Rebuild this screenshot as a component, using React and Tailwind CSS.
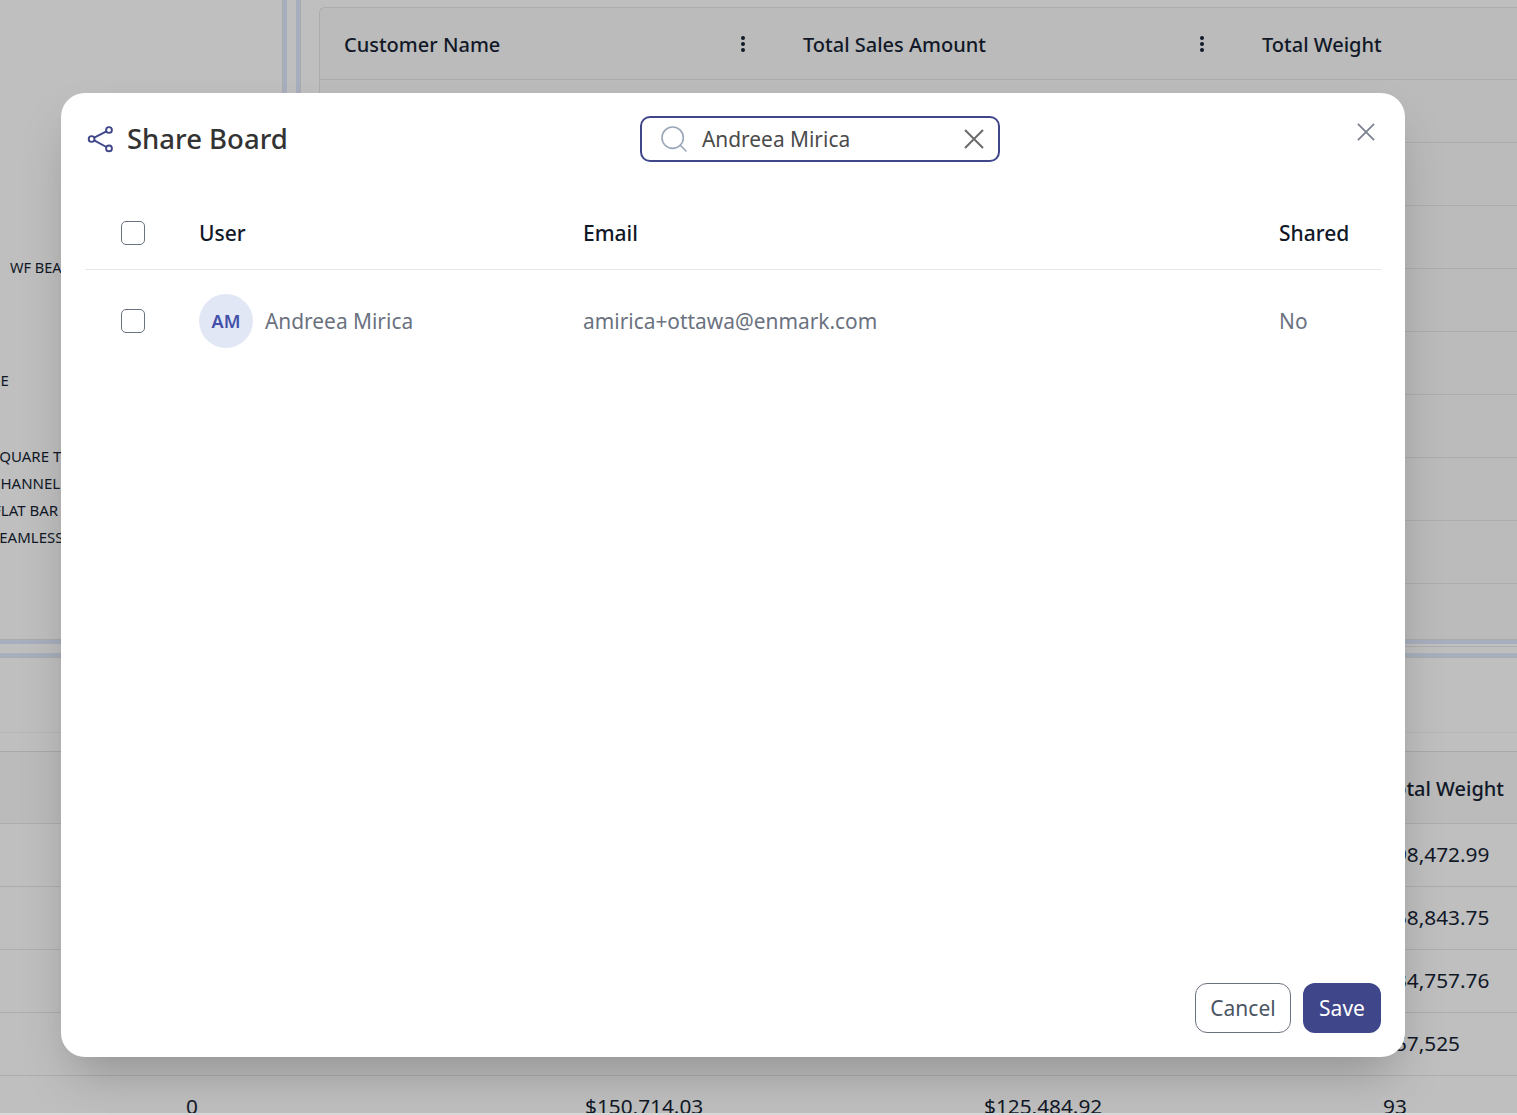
import React from 'react';
import { Search } from 'lucide-react';

const font = { fontFamily: '"Noto Sans", sans-serif' };

const ShareIcon = () => (
  <svg width="28" height="28" viewBox="0 0 28 28" fill="none" stroke="#3f478a" strokeWidth="1.9">
    <circle cx="23" cy="5" r="2.9" />
    <circle cx="5.6" cy="14" r="2.9" />
    <circle cx="23" cy="23.4" r="2.9" />
    <path d="M20.4 6.4 8.2 12.6M8.2 15.4l12.2 6.6" />
  </svg>
);

const Cross = ({ size, color }) => (
  <svg width={size} height={size} viewBox="0 0 20 20" fill="none" stroke={color} strokeWidth="2" className="shrink-0">
    <path d="M1 1l18 18M19 1 1 19" />
  </svg>
);

const Kebab = () => (
  <svg width="6" height="18" viewBox="0 0 6 18" fill="#111827">
    <circle cx="3" cy="3" r="2" />
    <circle cx="3" cy="9" r="2" />
    <circle cx="3" cy="15" r="2" />
  </svg>
);

const Checkbox = () => (
  <div className="w-6 h-6 rounded-[5px] border border-[#6b7280] bg-white" />
);

const topRows = [0, 1, 2, 3, 4, 5, 6, 7, 8];

const bottomRows = [
  ['', '', '', '298,472.99'],
  ['', '', '', '158,843.75'],
  ['', '', '', '134,757.76'],
  ['', '', '', '157,525'],
  ['0', '$150,714.03', '$125,484.92', '93'],
];

// greyed out board behind the modal
const Board = () => (
  <div className="h-[1113px] bg-[#bfbfbf] overflow-hidden text-[#111827]">
    <div className="h-[639px] flex">
      <div className="w-[282px] pt-[258px] text-[15px] leading-[19px] overflow-hidden whitespace-nowrap">
        <div className="pl-[10px] text-[14.5px]">WF BEAM</div>
        <div className="mt-[94px] -ml-[47px]">FLANGE</div>
        <div className="mt-[57px] -ml-[9px]">SQUARE TUBE</div>
        <div className="mt-[8px] -ml-[9px]">CHANNEL</div>
        <div className="mt-[8px] -ml-[7px]">FLAT BAR</div>
        <div className="mt-[8px] -ml-[9px]">SEAMLESS</div>
      </div>
      <div className="w-[19px] shrink-0 border-x border-[#ababab]">
        <div className="h-full border-x-[4px] border-[#a7aebd]" />
      </div>
      <div className="w-[18px] shrink-0" />
      <div className="flex-1 mt-[7px] bg-[#bbbbbb] border-l border-t border-[#adadad] rounded-tl-md">
        <div className="h-[72px] flex items-center text-[20px] font-medium border-b border-[#adadad] pl-[24px]">
          <div className="w-[459px] flex items-center justify-between pr-[57px]">
            <span className="pt-[3px]">Customer Name</span>
            <Kebab />
          </div>
          <div className="w-[459px] flex items-center justify-between pr-[57px]">
            <span className="pt-[3px]">Total Sales Amount</span>
            <Kebab />
          </div>
          <span className="pt-[3px]">Total Weight</span>
        </div>
        {topRows.map((r) => (
          <div key={r} className="h-[63px] border-b border-[#adadad]" />
        ))}
      </div>
    </div>
    <div className="h-[19px] border-y border-[#ababab]">
      <div className="h-full border-y-[4px] border-[#a7aebd]" />
    </div>
    <div className="h-[75px] border-b border-[#b5b5b5]" />
    <div className="h-[19px] border-b border-[#a9a9a9]" />
    <div className="h-[72px] bg-[#bbbbbb] flex items-center justify-end border-b border-[#adadad] text-[20px] font-medium pr-[13px]">
      <span className="pt-[3px]">Total Weight</span>
    </div>
    {bottomRows.map((row, i) => (
      <div key={i} className="h-[63px] pl-[186px] grid grid-cols-[399px_399px_399px_1fr] items-center border-b border-[#adadad] text-[20.8px]">
        {row.map((cell, j) => (
          <span key={j}>{cell}</span>
        ))}
      </div>
    ))}
  </div>
);

export default function App() {
  return (
    <div className="relative h-[1115px] overflow-hidden bg-[#d9d9d9]" style={font}>
      <Board />
      <div className="absolute left-[61px] top-[93px] w-[1344px] h-[964px] bg-white rounded-[24px] shadow-2xl flex flex-col px-[24px] pb-[24px]">
        <div className="h-[105px] flex items-start pt-[23px] relative">
          <div className="w-[555px] h-[46px] flex items-center gap-[13px] pl-[1px]">
            <ShareIcon />
            <span className="text-[27.5px] font-medium text-[#333333]">Share Board</span>
          </div>
          <div className="w-[360px] h-[46px] flex items-center border-[2.5px] border-[#3f478a] rounded-[10px] pl-[16px] pr-[14px]">
            <Search size={32} strokeWidth={1.2} className="text-[#9aa5b8] shrink-0" />
            <span className="ml-[12px] pt-[1px] flex-1 text-[20.9px] text-[#4b4b4b]">Andreea Mirica</span>
            <Cross size={20} color="#6b6b6b" />
          </div>
          <div className="absolute right-[6px] top-[30px]">
            <Cross size={18} color="#7b8190" />
          </div>
        </div>
        <div className="h-[72px] grid grid-cols-[114px_384px_696px_1fr] items-center border-b border-[#e5e7eb] text-[21px] font-medium text-[#111827]">
          <div className="pl-[36px] -mt-[1px]"><Checkbox /></div>
          <span>User</span>
          <span>Email</span>
          <span>Shared</span>
        </div>
        <div className="py-[24px] grid grid-cols-[114px_384px_696px_1fr] items-center text-[20.9px] text-[#6b7280]">
          <div className="pl-[36px]"><Checkbox /></div>
          <div className="flex items-center gap-[12px]">
            <div className="w-[54px] h-[54px] rounded-full bg-[#e2e7f6] flex items-center justify-center text-[18px] font-semibold text-[#4350a8]">AM</div>
            <span className="pt-[2px]">Andreea Mirica</span>
          </div>
          <span className="pt-[2px]">amirica+ottawa@enmark.com</span>
          <span className="pt-[2px]">No</span>
        </div>
        <div className="mt-auto flex justify-end gap-[12px] text-[21px]">
          <button className="w-[96px] h-[50px] pt-[2px] rounded-[12px] border border-[#6b7280] text-[#4b5563] bg-white">Cancel</button>
          <button className="w-[78px] h-[50px] pt-[2px] rounded-[12px] bg-[#3f478a] text-white">Save</button>
        </div>
      </div>
    </div>
  );
}
